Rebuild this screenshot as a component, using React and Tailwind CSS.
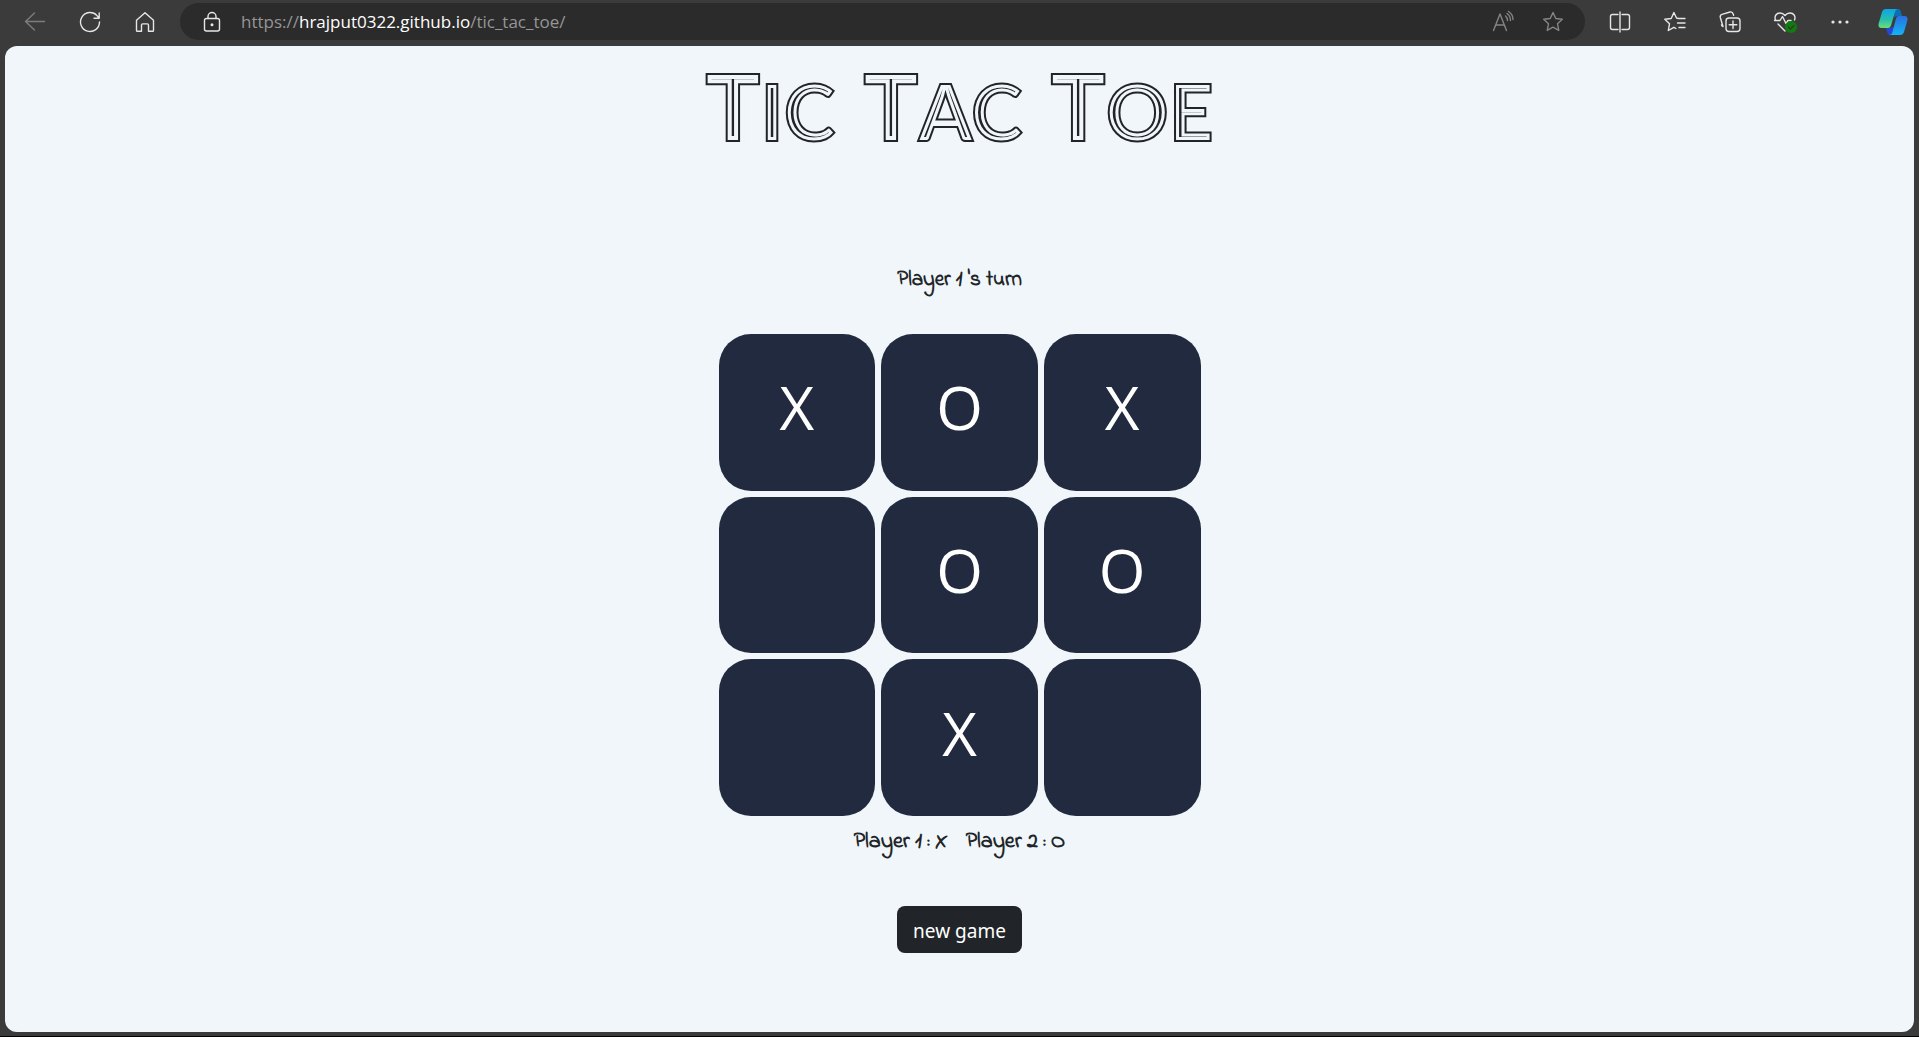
const cells = ["X", "O", "X", "", "O", "O", "", "X", ""];

const ICON = "h-6 w-6 block";
const line = { fill: "none", stroke: "currentColor", strokeWidth: 1.4, strokeLinecap: "round", strokeLinejoin: "round" };

const STAR = "M12 2.5l2.800 6 6.500.8-4.800 4.500 1.300 6.600-5.800-3.300-5.800 3.300 1.300-6.600L2.700 9.300l6.500-.8z";

function BarButton({ label, width = "w-[55px]", color = "text-[#e6e6e6]", children }) {
  return (
    <button type="button" aria-label={label} className={`flex h-8 shrink-0 items-center justify-center ${width} ${color}`}>
      {children}
    </button>
  );
}

function Svg({ children, className = ICON }) {
  return (
    <svg viewBox="0 0 24 24" className={className} {...line} aria-hidden="true">
      {children}
    </svg>
  );
}

function BrowserBar() {
  return (
    <header className="flex h-[46px] shrink-0 items-start pt-[3px] font-['Open_Sans',sans-serif]">
      <nav aria-label="Browser navigation" className="flex h-[37px] items-center pl-[7px] pr-2">
        <BarButton label="Back" color="text-[#7d7d7d]">
          <Svg><path d="M21.500 11.500H2.500M11.500 3L2.500 11.500l9 8.500" /></Svg>
        </BarButton>
        <BarButton label="Refresh">
          <Svg><path d="M21.500 12a9.500 9.500 0 1 1-2.500-6.400L21 8M21.200 3v5.200H16" /></Svg>
        </BarButton>
        <BarButton label="Home">
          <Svg><path d="M3.500 10.200L12 2.800l8.500 7.400v10.300q0 .8-.8.8h-4.200v-6.200q0-1.200-1.200-1.200h-4.600q-1.200 0-1.200 1.200v6.200H4.300q-.8 0-.8-.8z" /></Svg>
        </BarButton>
      </nav>
      <div className="flex h-[37px] min-w-0 flex-1 items-center rounded-full bg-[#2b2b2b] pl-5">
        <Svg className="block h-6 w-6 text-[#e6e6e6]">
          <rect x="4.500" y="8.500" width="15" height="12.500" rx="2" />
          <path d="M8 8.500V6.500a4 4 0 0 1 8 0v2" />
          <circle cx="12" cy="14.800" r=".8" fill="currentColor" />
        </Svg>
        <a href="https://hrajput0322.github.io/tic_tac_toe/" className="ml-[17px] flex-1 truncate text-[17px] text-[#969696]">
          https://<span className="text-white">hrajput0322.github.io</span>/tic_tac_toe/
        </a>
        <button type="button" aria-label="Read aloud" className="mr-[26px] text-[#858585]">
          <Svg><path d="M2.500 20.500L9 4l6.500 16.500M4.700 15h8.600M14.500 6q2 1.500 2 4.500M16 3.500q3.500 2.500 3.500 7M17.500 1.500q4.500 3 4.500 8" /></Svg>
        </button>
        <button type="button" aria-label="Add to favorites" className="mr-5 text-[#858585]">
          <Svg><path d={STAR} /></Svg>
        </button>
      </div>
      <div className="flex h-[37px] items-center pl-[7px]">
        <BarButton label="Split screen">
          <Svg><path d="M10 4.500H4.500q-2 0-2 2v11q0 2 2 2H10M14 4.500h5.500q2 0 2 2v11q0 2-2 2H14M12 2v20" /></Svg>
        </BarButton>
        <BarButton label="Favorites">
          <Svg><path d="M22 8.500h-6.500L13.500 8l-2.600-5.500L8.200 8.500l-6.400.8 4.700 4.500-1.200 6.700 5.600-3.200 2 1.200M22 13h-7.500M22 17.500h-6" /></Svg>
        </BarButton>
        <BarButton label="Collections">
          <Svg><rect x="8" y="8" width="14" height="13.500" rx="3" /><path d="M15 11v7.500M11.200 14.800h7.600M5 16.500L2.300 7.500Q1.800 5 4 4.300L12 2q2.500-.5 3.200 2l.4 1.300M5 16.500q-1-.3-1.500-1.500" /></Svg>
        </BarButton>
        <BarButton label="Browser essentials">
          <Svg>
            <path d="M2.500 10C1 6 3.500 3 7 3q3 0 5 2.500Q14 3 17 3c3.500 0 6 3 4.500 7M1.500 10.500H7l2.500-4 3.500 7 2-3h3M5 14l7 7" />
            <circle cx="18" cy="17" r="6" fill="#107c10" stroke="none" />
            <path d="M15.500 17l2 2 3.500-3.500" stroke="#303830" />
          </Svg>
        </BarButton>
        <BarButton label="Settings and more">
          <Svg><g fill="currentColor" stroke="none"><circle cx="5" cy="12" r="1.600" /><circle cx="12" cy="12" r="1.600" /><circle cx="19" cy="12" r="1.600" /></g></Svg>
        </BarButton>
        <BarButton label="Copilot" width="w-[52px]">
          <Copilot />
        </BarButton>
      </div>
    </header>
  );
}

function Copilot() {
  return (
    <svg viewBox="0 0 30 28" className="block h-7 w-[30px]" aria-hidden="true">
      <defs>
        <linearGradient id="teal" x1="0" y1="0" x2="0" y2="1"><stop offset="0" stopColor="#0ea4e8" /><stop offset=".55" stopColor="#25bfae" /><stop offset="1" stopColor="#6fdc7a" /></linearGradient>
        <linearGradient id="blue" x1="0" y1="0" x2="0" y2="1"><stop offset="0" stopColor="#2b6fe0" /><stop offset="1" stopColor="#12b4f5" /></linearGradient>
      </defs>
      <path d="M17 1h3q2 0 2.700 2l1.300 5h-5q-2 0-3 2z" fill="#0a6fb4" />
      <path d="M8 20h4q2 0 3-2l3 7q-1 2-3 2h-3q-2 0-2.600-2z" fill="#2447d8" />
      <path d="M8 1h12q-2 0-2.700 2L13 17.500Q12 20 10 20H3.500Q0 20 .5 16L4 4Q5 1 8 1z" fill="url(#teal)" />
      <path d="M20 8h6.500q3.500 0 3 4L26 24q-1 3-4 3H11q2.500 0 3.200-2L18 10.500Q18.700 8 20 8z" fill="url(#blue)" />
    </svg>
  );
}

/* Two stacked copies: a dark core thinned by a background-coloured stroke, and the outline over it. */
function Title() {
  return (
    <h1 className="relative font-['Lato',sans-serif] text-[92px] font-bold leading-[96px]">
      <span className="flex gap-7 whitespace-nowrap text-[#212529] [-webkit-text-stroke:10px_#f0f6f9]">
        <TitleWords small="text-[78px] [-webkit-text-stroke:8px_#f0f6f9]" />
      </span>
      <span aria-hidden="true" className="absolute inset-0 flex gap-7 whitespace-nowrap text-transparent [-webkit-text-stroke:2px_#212529]">
        <TitleWords small="text-[78px]" />
      </span>
    </h1>
  );
}

function TitleWords({ small }) {
  return ["Tic", "Tac", "Toe"].map((word) => (
    <span key={word}>
      {word[0]}
      <span className={small}>{word.slice(1).toUpperCase()}</span>
    </span>
  ));
}

export default function App() {
  return (
    <div className="flex min-h-screen flex-col border-b border-black bg-[#3b3b3b]">
      <BrowserBar />
      <main className="mx-[5px] mb-1 flex flex-1 flex-col items-center rounded-xl bg-[#f0f6f9] pt-3 text-[#212529]">
        <Title />
        <p className="mt-[107px] font-['Indie_Flower',cursive] text-[21px] font-bold leading-7">Player 1 's turn</p>
        <div className="mt-10 grid w-[482px] max-w-full grid-cols-3 gap-1.5">
          {cells.map((mark, i) => (
            <button key={i} type="button" aria-label={`Cell ${i + 1}`} className="flex aspect-square items-center justify-center rounded-[32px] bg-[#222a3f] pb-2.5 font-['Open_Sans',sans-serif] text-6xl leading-none text-white">
              {mark}
            </button>
          ))}
        </div>
        <p className="mt-3 flex gap-[18px] font-['Indie_Flower',cursive] text-[22px] font-bold leading-7">
          <span>Player 1 : X</span>
          <span>Player 2 : O</span>
        </p>
        <button type="button" className="mt-[50px] h-[47px] rounded-lg bg-[#212529] px-4 pt-1 font-['Noto_Sans',sans-serif] text-[19px] text-white">new game</button>
      </main>
    </div>
  );
}
